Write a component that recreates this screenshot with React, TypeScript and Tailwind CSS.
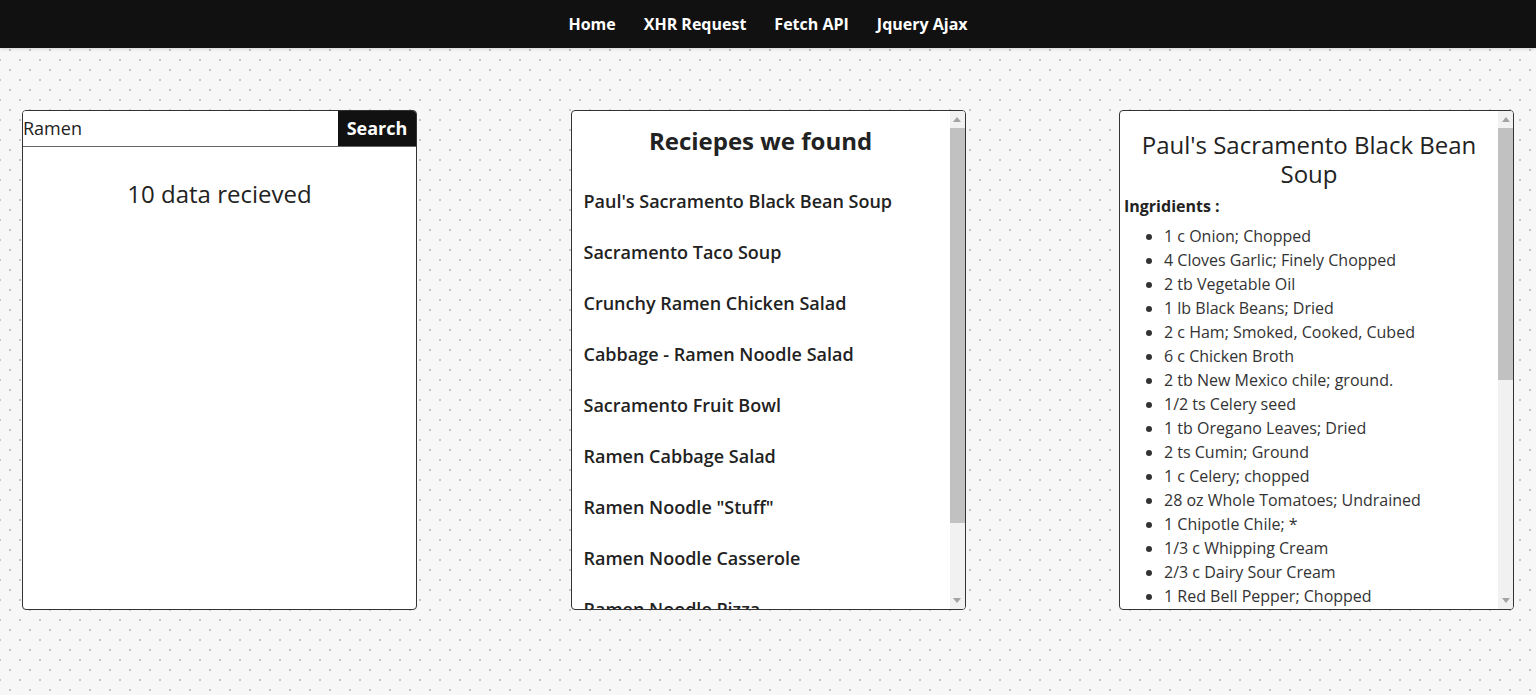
import React from "react";

const recipes = [
  "Paul's Sacramento Black Bean Soup",
  "Sacramento Taco Soup",
  "Crunchy Ramen Chicken Salad",
  "Cabbage - Ramen Noodle Salad",
  "Sacramento Fruit Bowl",
  "Ramen Cabbage Salad",
  'Ramen Noodle "Stuff"',
  "Ramen Noodle Casserole",
  "Ramen Noodle Pizza",
  "Ramen Noodle Stir Fry",
];

const ingredients = [
  "1 c Onion; Chopped",
  "4 Cloves Garlic; Finely Chopped",
  "2 tb Vegetable Oil",
  "1 lb Black Beans; Dried",
  "2 c Ham; Smoked, Cooked, Cubed",
  "6 c Chicken Broth",
  "2 tb New Mexico chile; ground.",
  "1/2 ts Celery seed",
  "1 tb Oregano Leaves; Dried",
  "2 ts Cumin; Ground",
  "1 c Celery; chopped",
  "28 oz Whole Tomatoes; Undrained",
  "1 Chipotle Chile; *",
  "1/3 c Whipping Cream",
  "2/3 c Dairy Sour Cream",
  "1 Red Bell Pepper; Chopped",
  "1/4 c Cilantro; Chopped",
  "1 Lime; Juiced",
  "Salt; to taste",
  "Pepper; to taste",
];

function Scrollbar({ thumb }: { thumb: number }) {
  return (
    <div className="w-[15px] shrink-0 flex flex-col bg-[#f1f1f1]">
      <div className="h-[17px] flex items-center justify-center">
        <svg width="8" height="5" viewBox="0 0 8 5">
          <polygon points="0,5 8,5 4,0" fill="#a3a3a3" />
        </svg>
      </div>
      <div className="flex-1 relative">
        <div className="bg-[#c1c1c1] w-full" style={{ height: thumb }} />
      </div>
      <div className="h-[17px] flex items-center justify-center">
        <svg width="8" height="5" viewBox="0 0 8 5">
          <polygon points="0,0 8,0 4,5" fill="#a3a3a3" />
        </svg>
      </div>
    </div>
  );
}

export default function App() {
  return (
    <div className="min-h-screen font-['Open_Sans',sans-serif] text-[#222] bg-[#f7f7f7] bg-[radial-gradient(circle,#c6c6c6_1px,transparent_1.5px),radial-gradient(circle,#c6c6c6_1px,transparent_1.5px)] bg-size-[20px_20px] bg-position-[0px_0px,10px_10px]">
      <nav className="h-[48px] bg-[#111111] flex items-center justify-center gap-[28px] shadow-[0_1px_3px_rgba(0,0,0,0.15)]">
        {["Home", "XHR Request", "Fetch API", "Jquery Ajax"].map((l) => (
          <a key={l} className="text-white font-bold text-[16px] leading-[22px] cursor-pointer">
            {l}
          </a>
        ))}
      </nav>

      <main className="flex justify-between px-[22px] pt-[62px]">
        {/* Left panel */}
        <section className="w-[395px] h-[500px] bg-white border border-[#333] rounded-[4px] overflow-hidden flex flex-col">
          <div className="flex h-[36px] border-b border-[#666]">
            <input
              defaultValue="Ramen"
              className="flex-1 min-w-0 px-0 text-[18px] text-[#222] outline-none bg-white font-['Open_Sans',sans-serif]"
            />
            <button className="w-[78px] bg-[#111111] text-white font-bold text-[18px] font-['Open_Sans',sans-serif]">
              Search
            </button>
          </div>
          <p className="text-center text-[24px] leading-[32px] mt-[31px]">10 data recieved</p>
        </section>

        {/* Middle panel */}
        <section className="w-[395px] h-[500px] bg-white border border-[#333] rounded-[4px] overflow-hidden flex">
          <div className="flex-1 min-w-0 overflow-hidden">
            <h2 className="text-center font-bold text-[24px] leading-[29px] pt-[15px] mb-[21px]">
              Reciepes we found
            </h2>
            <ul>
              {recipes.map((r) => (
                <li key={r} className="h-[51px] flex items-center px-[12px] text-[18px] font-semibold">
                  {r}
                </li>
              ))}
            </ul>
          </div>
          <Scrollbar thumb={395} />
        </section>

        {/* Right panel */}
        <section className="w-[395px] h-[500px] bg-white border border-[#333] rounded-[4px] overflow-hidden flex">
          <div className="flex-1 min-w-0 overflow-hidden px-[4px]">
            <h2 className="text-center text-[24px] leading-[29px] pt-[19px] pb-[6px] px-[6px]">
              Paul's Sacramento Black Bean Soup
            </h2>
            <p className="font-bold text-[16px] leading-[24px]">Ingridients :</p>
            <ul className="list-disc pl-[40px] pt-[6px] text-[16px] leading-[24px] text-[#333]">
              {ingredients.map((i) => (
                <li key={i}>{i}</li>
              ))}
            </ul>
            <p className="font-bold text-[16px] leading-[24px] mt-[8px]">Directions :</p>
            <p className="text-[16px] leading-[24px] text-[#333] pb-[12px]">
              In a large pot, saute onion and garlic in oil until tender. Add beans, ham, broth,
              chile, celery seed, oregano and cumin. Bring to a boil, reduce heat and simmer
              covered for 2 hours or until beans are tender.
            </p>
          </div>
          <Scrollbar thumb={252} />
        </section>
      </main>
    </div>
  );
}
